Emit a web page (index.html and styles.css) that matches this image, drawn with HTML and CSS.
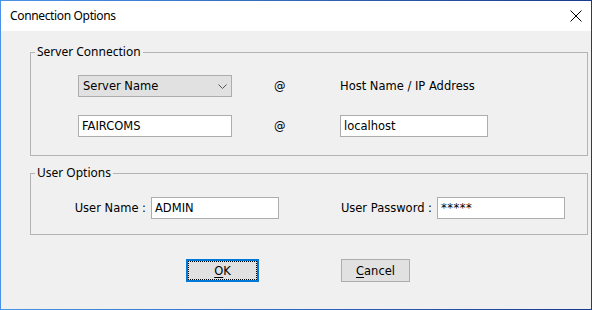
FILE: index.html
```html
<!DOCTYPE html>
<html>
<head>
<meta charset="utf-8">
<link rel="stylesheet" href="styles.css">
</head>
<body>
<div class="window">
  <div class="titlebar">
    <span class="title">Connection Options</span>
    <svg class="close" width="12" height="12" viewBox="0 0 12 12"><path d="M0.5 0.5 L11.5 11.5 M11.5 0.5 L0.5 11.5" stroke="#000" stroke-width="1"/></svg>
  </div>
  <div class="client">
    <fieldset class="group server">
      <legend>Server Connection</legend>
      <div class="server-grid">
        <div class="combo"><span>Server Name</span>
          <svg class="chev" width="9" height="5" viewBox="0 0 9 5"><path d="M0.5 0.5 L4.5 4.5 L8.5 0.5" fill="none" stroke="#555" stroke-width="1"/></svg>
        </div>
        <div class="at">@</div>
        <div class="label">Host Name / IP Address</div>
        <div class="input w154">FAIRCOMS</div>
        <div class="at">@</div>
        <div class="input">localhost</div>
      </div>
    </fieldset>
    <fieldset class="group user">
      <legend>User Options</legend>
      <div class="user-grid">
        <div class="rlabel">User Name :</div>
        <div class="input">ADMIN</div>
        <div class="rlabel">User Password :</div>
        <div class="input pw">*****</div>
      </div>
    </fieldset>
    <div class="buttons">
      <div class="btn ok"><span><u>O</u>K</span></div>
      <div class="btn cancel"><span><u>C</u>ancel</span></div>
    </div>
  </div>
</div>
</body>
</html>
```
FILE: styles.css
```css
html, body { margin: 0; padding: 0; }
body { width: 592px; height: 310px; overflow: hidden; }
.window {
  box-sizing: border-box;
  width: 592px; height: 310px;
  padding: 1px;
  background: linear-gradient(to right, #4b93e6, #1a3a8c);
}
.titlebar {
  height: 30px;
  background: #fff;
  display: flex;
  align-items: center;
  justify-content: space-between;
  padding: 0 9px 0 9px;
  font-family: "Noto Sans", sans-serif;
  font-size: 12px;
  color: #000;
}
.title { line-height: 30px; letter-spacing: -0.35px; }
.client {
  height: 278px;
  background: #f0f0f0;
  padding: 13px 3px 0 29px;
  box-sizing: border-box;
  font-family: "DejaVu Sans", sans-serif;
  font-size: 11.5px;
  color: #000;
}
.group {
  margin: 0;
  min-width: 0;
  border: 1px solid #b4b4b4;
  width: 558px;
  box-sizing: border-box;
  padding: 15px 0 18px 0;
}
.group legend {
  font-family: "Noto Sans", sans-serif;
  font-size: 12px;
  line-height: 16px;
  margin-left: 4px;
  padding: 0 2px;
}
.server-grid {
  display: grid;
  grid-template-columns: 195px 67px 148px;
  grid-auto-rows: 22px;
  row-gap: 18px;
  padding-left: 47px;
  align-items: center;
}
.combo {
  box-sizing: border-box;
  width: 154px; height: 22px;
  background: #e1e1e1;
  border: 1px solid #adadad;
  display: flex; align-items: center; justify-content: space-between;
  padding: 0 4px 0 4px;
}
.at { padding-left: 1px; }
.input {
  box-sizing: border-box;
  height: 22px;
  background: #fff;
  border: 1px solid #adadad;
  display: flex; align-items: center;
  padding-left: 3px;
}
.w154 { width: 154px; }
.user { margin-top: 9px; padding: 16px 0 15px 0; }
.user-grid {
  display: grid;
  grid-template-columns: 120px 128px 158px 128px;
  grid-auto-rows: 22px;
  align-items: center;
}
.rlabel { text-align: right; padding-right: 5px; }
.pw { align-items: flex-start; padding-top: 3px; letter-spacing: 0.5px; }
.buttons {
  display: flex;
  margin-top: 24px;
  padding-left: 156px;
  gap: 82px;
}
.btn {
  box-sizing: border-box;
  height: 23px;
  background: #e1e1e1;
  border: 1px solid #adadad;
  display: flex; align-items: center; justify-content: center;
}
.ok { width: 73px; border: 2px solid #0078d7; outline: 1px dotted #000; outline-offset: -3px; }
.cancel { width: 69px; }
.btn u { text-underline-offset: 2px; }
```
